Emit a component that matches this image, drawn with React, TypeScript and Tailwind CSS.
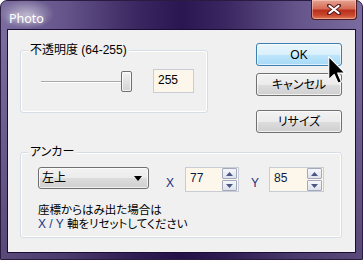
import React from "react";

function Btn({ children, primary }: { children: React.ReactNode; primary?: boolean }) {
  return (
    <div
      className={
        "w-[86px] h-[23px] flex items-center justify-center rounded-[3px] border text-[12px] leading-[14px] text-black " +
        (primary
          ? "border-[#3c7fb1] bg-[linear-gradient(to_bottom,#eaf6fd_0%,#d9f0fc_50%,#bee6fd_51%,#a7d9f5_100%)] shadow-[inset_0_0_0_1px_rgba(255,255,255,0.6)]"
          : "border-[#707070] bg-[linear-gradient(to_bottom,#f2f2f2_0%,#ebebeb_50%,#dddddd_51%,#cfcfcf_100%)] shadow-[inset_0_0_0_1px_rgba(255,255,255,0.7)]")
      }
    >
      {children}
    </div>
  );
}

function SpinBtn({ up }: { up?: boolean }) {
  return (
    <div className="w-[15px] h-[11px] flex items-center justify-center border border-[#a3a8bd] rounded-[1px] bg-[linear-gradient(to_bottom,#f4f6fb,#dfe3ee)]">
      <svg width="7" height="4" viewBox="0 0 7 4">
        {up ? <path d="M0 4 L3.5 0 L7 4 Z" fill="#4a5680" /> : <path d="M0 0 L3.5 4 L7 0 Z" fill="#4a5680" />}
      </svg>
    </div>
  );
}

function SpinBox({ value, w }: { value: string; w: string }) {
  return (
    <div className={"h-[25px] flex border border-[#c8ccd6] bg-[#fdf6ea] " + w}>
      <div className="flex-1 pl-[4px] pt-[3px] text-[12px] leading-[14px] text-[#0b1a45]">{value}</div>
      <div className="flex flex-col gap-[1px] pr-[1px] pt-0">
        <SpinBtn up />
        <SpinBtn />
      </div>
    </div>
  );
}

function Group({ label, className, children }: { label: string; className: string; children: React.ReactNode }) {
  return (
    <div className={"relative rounded-[3px] border border-[#d5dde6] shadow-[inset_0_0_0_1px_#ffffff] " + className}>
      <span className="absolute left-[7px] top-[-8px] px-[2px] bg-[#f0f0f0] text-[12px] leading-[14px] text-black">
        {label}
      </span>
      {children}
    </div>
  );
}

export default function App() {
  return (
    <div className="w-[363px] h-[260px] bg-white font-['Liberation_Sans','Noto_Sans_CJK_JP',sans-serif] [font-feature-settings:'palt'] relative">
      <div className="w-[363px] h-[260px] flex flex-col rounded-t-[7px] border border-[#2a1c40] bg-[linear-gradient(to_bottom,rgba(0,0,0,0)_0px,rgba(0,0,0,0)_40px,rgba(25,8,50,0.35)_100%),linear-gradient(to_right,#7a6c9e_0%,#64548a_18%,#3a2660_38%,#2a1650_50%,#3a2660_62%,#64548a_82%,#7a6c9e_100%)] px-[6px] pb-[6px]">
        {/* title bar */}
        <div className="h-[28px] flex items-start justify-between">
          <div className="ml-[2px] mt-[5px] relative">
            <div className="absolute -left-[10px] -top-[7px] w-[56px] h-[30px] rounded-full bg-[radial-gradient(ellipse_at_center,rgba(255,255,255,0.5),rgba(255,255,255,0)_70%)]" />
            <span className="relative font-['Noto_Sans',sans-serif] text-[12.5px] leading-[16px] text-white [text-shadow:0_0_4px_rgba(255,255,255,0.7)]">
              Photo
            </span>
          </div>
          <div className="-mt-[1px] -mr-[1px] w-[46px] h-[20px] rounded-b-[4px] border border-[#4a1a22] border-t-0 bg-[linear-gradient(to_bottom,#e6a493_0%,#d46c58_45%,#b8301c_55%,#c9482e_80%,#e07a58_100%)] shadow-[inset_0_0_0_1px_rgba(255,220,210,0.45)] flex items-center justify-center">
            <svg width="14" height="11" viewBox="0 0 14 11">
              <path d="M2 1.5 L12 9.5 M12 1.5 L2 9.5" stroke="#5a1c1c" strokeWidth="4" strokeLinecap="round" />
              <path d="M2.5 2 L11.5 9 M11.5 2 L2.5 9" stroke="#ffffff" strokeWidth="2.2" strokeLinecap="round" />
            </svg>
          </div>
        </div>
        {/* client area */}
        <div className="flex-1 border border-[#1c0c34] bg-[#f0f0f0] pl-[12px] pt-[13px]">
          <div className="flex items-start">
            <Group label="不透明度 (64-255)" className="mt-[7px] w-[188px] h-[63px]">
              <div className="flex items-start pl-[20px] pt-[18px]">
                <div className="relative w-[90px] h-[24px]">
                  <div className="absolute left-0 top-[12px] w-[84px] h-[1px] bg-[#a9a9a9]" />
                  <div className="absolute left-0 top-[13px] w-[84px] h-[1px] bg-[#ffffff]" />
                  <div className="absolute left-[80px] top-[2px] w-[11px] h-[21px] rounded-[2px] border border-[#707070] bg-[linear-gradient(to_bottom,#f3f3f3,#e2e2e2_50%,#d3d3d3)] shadow-[inset_0_0_0_1px_rgba(255,255,255,0.7)]" />
                </div>
                <div className="ml-[22px] w-[41px] h-[24px] border border-[#c8ccd6] bg-[#fdf6ea] pl-[4px] pt-[3px] text-[12px] leading-[14px] text-black">
                  255
                </div>
              </div>
            </Group>
            <div className="ml-[48px] flex flex-col">
              <div className="relative">
                <Btn primary>OK</Btn>
              </div>
              <div className="mt-[7px]">
                <Btn>キャンセル</Btn>
              </div>
              <div className="mt-[14px]">
                <Btn>リサイズ</Btn>
              </div>
            </div>
          </div>
          <Group label="アンカー" className="mt-[19px] w-[322px] h-[86px]">
            <div className="flex items-start pl-[17px] pt-[14px]">
              <div className="w-[111px] h-[22px] rounded-[3px] border border-[#707070] bg-[linear-gradient(to_bottom,#f2f2f2_0%,#ebebeb_50%,#dddddd_51%,#cfcfcf_100%)] shadow-[inset_0_0_0_1px_rgba(255,255,255,0.7)] flex items-center justify-between pl-[3px] pr-[6px]">
                <span className="text-[12px] leading-[14px] text-black">左上</span>
                <svg width="8" height="5" viewBox="0 0 8 5">
                  <path d="M0 0 L8 0 L4 5 Z" fill="#000" />
                </svg>
              </div>
              <div className="ml-[17px] mt-[9px] w-[8px] text-[12px] leading-[14px] text-[#1b2f7a]">X</div>
              <div className="ml-[11px]">
                <SpinBox value="77" w="w-[54px]" />
              </div>
              <div className="ml-[12px] mt-[9px] w-[8px] text-[12px] leading-[14px] text-[#1b2f7a]">Y</div>
              <div className="ml-[10px]">
                <SpinBox value="85" w="w-[55px]" />
              </div>
            </div>
            <div className="pl-[17px] mt-[11px] text-[11.5px] leading-[14px] text-black">
              <div>座標からはみ出た場合は</div>
              <div>
                <span className="text-[#1b3585] text-[12px]">X / Y</span> 軸をリセットしてください
              </div>
            </div>
          </Group>
        </div>
      </div>
      {/* mouse cursor */}
      <svg className="absolute left-[328px] top-[56px]" width="18" height="28" viewBox="0 0 12.5 19.5">
        <path d="M0.5 0.5 L0.5 16.5 L4.3 12.8 L7 19 L9.3 18 L6.7 11.9 L11.8 11.9 Z" fill="#000" stroke="#fff" strokeWidth="0.8" strokeLinejoin="round" />
      </svg>
    </div>
  );
}
